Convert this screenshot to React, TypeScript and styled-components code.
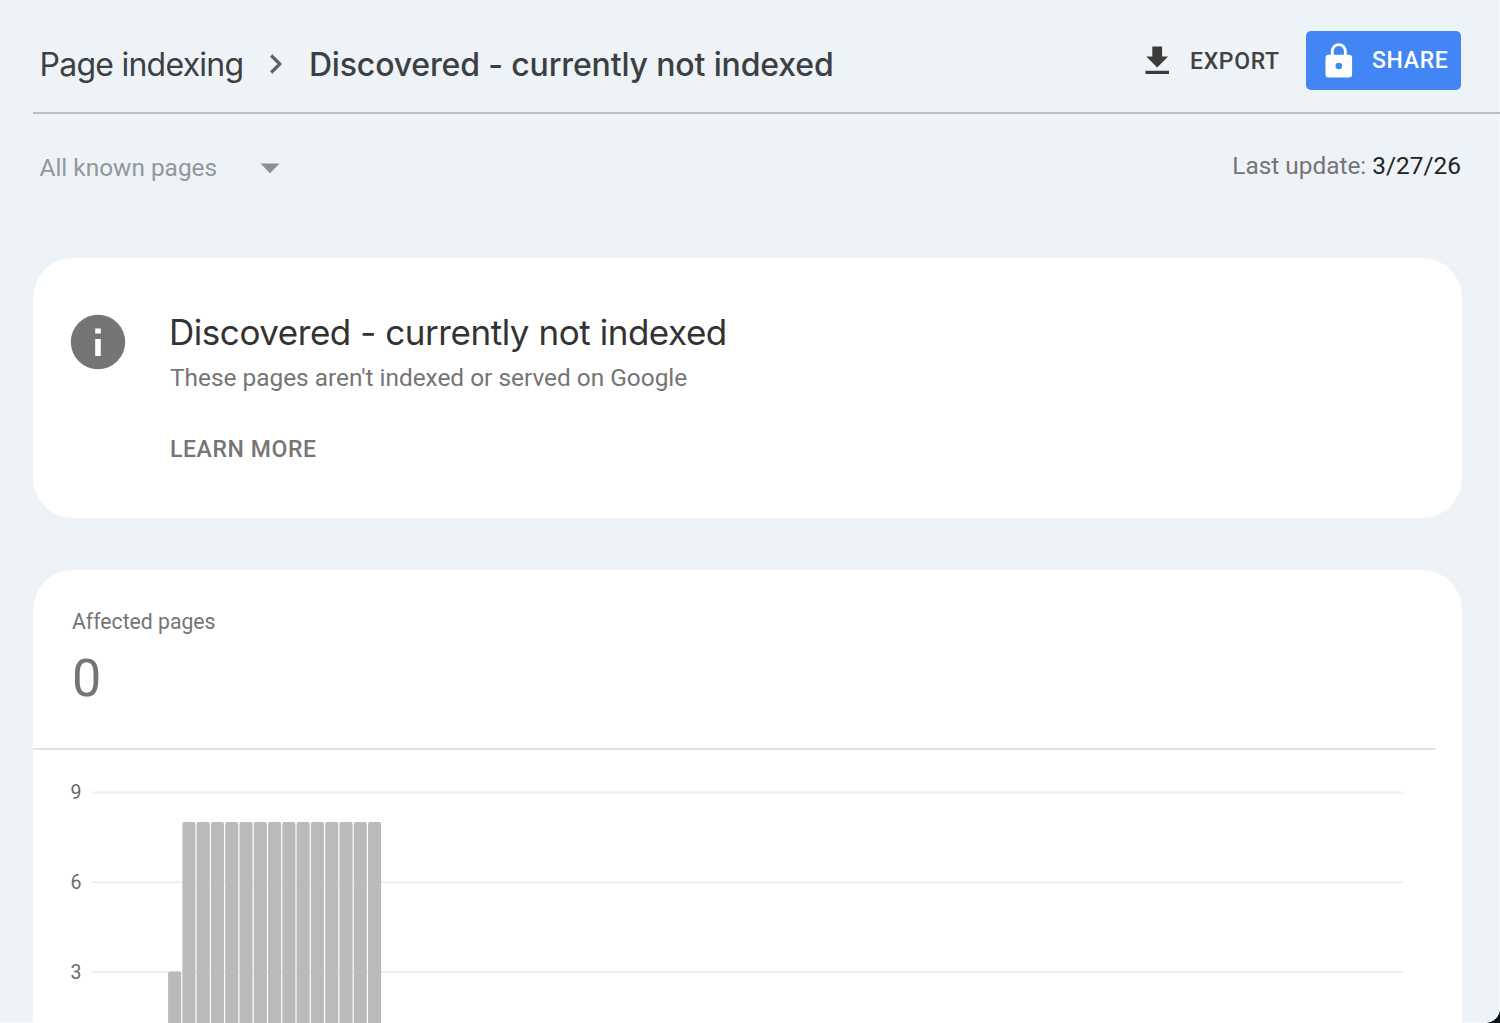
import React from "react";
import styled, { createGlobalStyle } from "styled-components";

const GlobalStyle = createGlobalStyle`
  * { box-sizing: border-box; }
  html, body { margin: 0; background: #0b1218; overflow: hidden; }
  p, h1, h2 { margin: 0; font-weight: 400; }
  button { border: 0; padding: 0; background: none; }
  svg { flex-shrink: 0; }
`;

const Page = styled.main`
  width: 1500px;
  height: 1023px;
  overflow: hidden;
  background: #eef3f8;
  border-bottom-right-radius: 15px;
  box-shadow: inset -1px -1px 0 #f4f8fb;
  font-family: Roboto, "Liberation Sans", sans-serif;
  color: #757575;
  padding-left: 33px;
`;

const TopBar = styled.header`
  height: 114px;
  border-bottom: 2px solid #b9c0c5;
  display: flex;
  justify-content: space-between;
  padding: 31px 39px 0 6.5px;
`;

const Breadcrumb = styled.nav`
  display: flex;
  align-items: center;
  height: 66px;
  color: #3c4043;
  white-space: nowrap;
`;

const Crumb = styled.span<{ $current?: boolean }>`
  font: ${(p) => (p.$current ? 500 : 400)} 32px/40px Inter, Roboto, sans-serif;
  letter-spacing: ${(p) => (p.$current ? -0.15 : -0.75)}px;
  padding-top: 1px;
`;

const Chevron = styled.svg`
  width: 14px;
  height: 20px;
  margin: 0 25.5px 0 26px;
`;

const Actions = styled.div`
  display: flex;
  align-items: flex-start;
  gap: 27px;
`;

const ActionButton = styled.button<{ $primary?: boolean }>`
  display: flex;
  align-items: center;
  height: 59px;
  width: ${(p) => (p.$primary ? "155px" : "134px")};
  padding-left: ${(p) => (p.$primary ? "18.5px" : "0")};
  gap: ${(p) => (p.$primary ? "19.5px" : "20px")};
  border-radius: 5px;
  background: ${(p) => (p.$primary ? "#4285f4" : "transparent")};
  color: ${(p) => (p.$primary ? "#fff" : "#424242")};
  font: 500 23px/28px Roboto, sans-serif;
  letter-spacing: 0.65px;
`;

const ExportLabel = styled.span`
  padding-top: 2px;
`;

const Filters = styled.div`
  display: flex;
  justify-content: space-between;
  height: 144px;
  padding: 38px 39px 0 6.5px;
  font-size: 24.4px;
  line-height: 30px;
`;

const Select = styled.div`
  display: flex;
  align-items: center;
  gap: 43px;
  height: 32px;
  color: #93979a;
`;

const Updated = styled.p`
  line-height: 28px;
  color: #757575;
  b { font-weight: 400; color: #1f2225; }
`;

const Card = styled.section<{ $height: number }>`
  width: 1429px;
  height: ${(p) => p.$height}px;
  border-radius: 40px;
  background: #fff;
  margin-bottom: 52px;
`;

const InfoBody = styled.div`
  display: flex;
  gap: 44px;
  padding: 53px 0 0 37px;
`;

const InfoIcon = styled.svg`
  width: 56px;
  height: 56px;
  margin-top: 3px;
`;

const InfoTitle = styled.h2`
  font: 400 35px/42px Inter, Roboto, sans-serif;
  letter-spacing: -0.45px;
  margin-left: -1px;
  color: #333;
`;

const InfoText = styled.p`
  font-size: 24.4px;
  line-height: 30px;
  margin-top: 10px;
`;

const LearnMore = styled.button`
  display: block;
  margin-top: 43px;
  font: 500 23px/28px Roboto, sans-serif;
  letter-spacing: 0.6px;
  color: #757575;
`;

const Metric = styled.div`
  width: 1403px;
  height: 180px;
  padding: 38px 0 0 39px;
  border-bottom: 2px solid #e2e2e2;
`;

const MetricLabel = styled.p`
  font-size: 21.2px;
  line-height: 27px;
`;

const MetricValue = styled.p`
  font-size: 52px;
  line-height: 60px;
  margin-top: 14px;
`;

const Chart = styled.svg`
  display: block;
  width: 1429px;
  height: 320px;
  font: 400 19.5px Roboto, sans-serif;
`;

const history = [3, ...Array(14).fill(8)];
const UNIT = 29.9;
const BASE = 311.2;

export default function App() {
  return (
    <>
      <GlobalStyle />
      <Page>
        <TopBar>
          <Breadcrumb>
            <Crumb>Page indexing</Crumb>
            <Chevron viewBox="0 0 14 20">
              <path d="M2.2 1.5 10.8 10l-8.6 8.5" fill="none" stroke="#5f6368" strokeWidth="3.2" />
            </Chevron>
            <Crumb $current>Discovered - currently not indexed</Crumb>
          </Breadcrumb>
          <Actions>
            <ActionButton>
              <svg width="25" height="30" viewBox="0 0 25 30">
                <path d="M7.3 0.5h9.8v10h6L12.2 21.5 1.3 10.5h6zM.5 24.7h23.5v3.3H.5z" fill="#3c3c3c" />
              </svg>
              <ExportLabel>EXPORT</ExportLabel>
            </ActionButton>
            <ActionButton $primary>
              <svg width="28" height="36" viewBox="0 0 28 36">
                <path
                  fill="#fff"
                  fillRule="evenodd"
                  d="M23.8 11.7h-2V8.2a8 8 0 0 0-16 0v3.5h-2A3.3 3.3 0 0 0 .5 15v16.2A3.3 3.3 0 0 0 3.8 34.5h20a3.3 3.3 0 0 0 3.3-3.3V15a3.3 3.3 0 0 0-3.3-3.3zM8.7 11.7V8.2a5.1 5.1 0 0 1 10.2 0v3.5zM13.8 19.7a3.3 3.3 0 1 1 0 6.600 3.3 3.3 0 0 1 0-6.600z"
                />
              </svg>
              SHARE
            </ActionButton>
          </Actions>
        </TopBar>
        <Filters>
          <Select>
            All known pages
            <svg width="20" height="11" viewBox="0 0 20 11">
              <path d="M.5.5h19L10 10.3z" fill="#8c9093" />
            </svg>
          </Select>
          <Updated>Last update: <b>3/27/26</b></Updated>
        </Filters>
        <Card $height={260}>
          <InfoBody>
            <InfoIcon viewBox="0 0 56 56">
              <circle cx="28" cy="28" r="27.2" fill="#757575" />
              <path d="M25.2 14.5h5.6v5h-5.6zM25.2 25h5.6v17h-5.6z" fill="#fff" />
            </InfoIcon>
            <div>
              <InfoTitle>Discovered - currently not indexed</InfoTitle>
              <InfoText>These pages aren't indexed or served on Google</InfoText>
              <LearnMore>LEARN MORE</LearnMore>
            </div>
          </InfoBody>
        </Card>
        <Card $height={540}>
          <Metric>
            <MetricLabel>Affected pages</MetricLabel>
            <MetricValue>0</MetricValue>
          </Metric>
          <Chart viewBox="0 0 1429 320">
            {[9, 6, 3].map((v) => (
              <g key={v}>
                <path d={`M59 ${BASE - v * UNIT + 0.5}H1370`} stroke="#eeeeee" strokeWidth="2" />
                <text x="37.5" y={BASE - v * UNIT + 7.3} fill="#6b6b6b">{v}</text>
              </g>
            ))}
            {history.map((v, i) => (
              <rect
                key={i}
                x={135.1 + i * 14.28}
                y={BASE - v * UNIT}
                width="13.1"
                height={v * UNIT}
                rx="2"
                fill="#bababa"
              />
            ))}
          </Chart>
        </Card>
      </Page>
    </>
  );
}
